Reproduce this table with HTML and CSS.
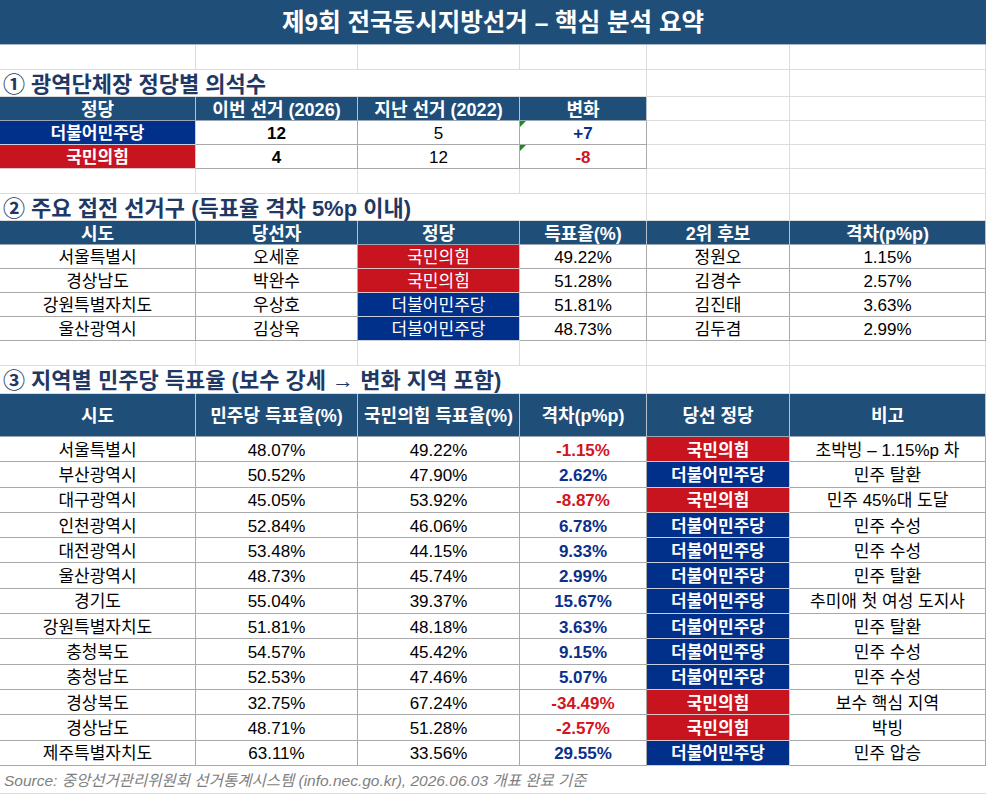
FILE: index.html
```html
<!DOCTYPE html>
<html lang="ko">
<head>
<meta charset="utf-8">
<title>제9회 전국동시지방선거 – 핵심 분석 요약</title>
<link rel="stylesheet" href="styles.css">
</head>
<body>
<div class="sheet">
  <div class="title">제9회 전국동시지방선거 – 핵심 분석 요약</div>

  <div class="r blank"><div class="g"></div><div class="g"></div><div class="g"></div><div class="g"></div><div class="g"></div><div class="g"></div></div>

  <div class="r sec"><div class="sec-t span3">① 광역단체장 정당별 의석수</div><div class="g"></div><div class="g"></div><div class="g"></div></div>

  <div class="r h24">
    <div class="c hd">정당</div><div class="c hd">이번 선거 (2026)</div><div class="c hd">지난 선거 (2022)</div><div class="c hd">변화</div><div class="g"></div><div class="g"></div>
  </div>
  <div class="r h24">
    <div class="c p-dem b">더불어민주당</div><div class="c b">12</div><div class="c">5</div><div class="c b blue flag">+7</div><div class="g"></div><div class="g"></div>
  </div>
  <div class="r h24">
    <div class="c p-ppp b">국민의힘</div><div class="c b">4</div><div class="c">12</div><div class="c b red flag">-8</div><div class="g"></div><div class="g"></div>
  </div>

  <div class="r blank"><div class="g"></div><div class="g"></div><div class="g"></div><div class="g"></div><div class="g"></div><div class="g"></div></div>

  <div class="r sec"><div class="sec-t span3">② 주요 접전 선거구 (득표율 격차 5%p 이내)</div><div class="g"></div><div class="g"></div><div class="g"></div></div>

  <div class="r h24">
    <div class="c hd">시도</div><div class="c hd">당선자</div><div class="c hd">정당</div><div class="c hd">득표율(%)</div><div class="c hd">2위 후보</div><div class="c hd">격차(p%p)</div>
  </div>
  <div class="r h24"><div class="c">서울특별시</div><div class="c">오세훈</div><div class="c p-ppp">국민의힘</div><div class="c">49.22%</div><div class="c">정원오</div><div class="c">1.15%</div></div>
  <div class="r h24"><div class="c">경상남도</div><div class="c">박완수</div><div class="c p-ppp">국민의힘</div><div class="c">51.28%</div><div class="c">김경수</div><div class="c">2.57%</div></div>
  <div class="r h24"><div class="c">강원특별자치도</div><div class="c">우상호</div><div class="c p-dem">더불어민주당</div><div class="c">51.81%</div><div class="c">김진태</div><div class="c">3.63%</div></div>
  <div class="r h24"><div class="c">울산광역시</div><div class="c">김상욱</div><div class="c p-dem">더불어민주당</div><div class="c">48.73%</div><div class="c">김두겸</div><div class="c">2.99%</div></div>

  <div class="r blank"><div class="g"></div><div class="g"></div><div class="g"></div><div class="g"></div><div class="g"></div><div class="g"></div></div>

  <div class="r sec sec3"><div class="sec-t span3">③ 지역별 민주당 득표율 (보수 강세 → 변화 지역 포함)</div><div class="g"></div><div class="g"></div><div class="g"></div></div>

  <div class="r h43">
    <div class="c hd">시도</div><div class="c hd">민주당 득표율(%)</div><div class="c hd">국민의힘 득표율(%)</div><div class="c hd">격차(p%p)</div><div class="c hd">당선 정당</div><div class="c hd">비고</div>
  </div>
  <div class="r h25"><div class="c">서울특별시</div><div class="c">48.07%</div><div class="c">49.22%</div><div class="c b red">-1.15%</div><div class="c p-ppp b">국민의힘</div><div class="c">초박빙 – 1.15%p 차</div></div>
  <div class="r h25"><div class="c">부산광역시</div><div class="c">50.52%</div><div class="c">47.90%</div><div class="c b blue">2.62%</div><div class="c p-dem b">더불어민주당</div><div class="c">민주 탈환</div></div>
  <div class="r h25"><div class="c">대구광역시</div><div class="c">45.05%</div><div class="c">53.92%</div><div class="c b red">-8.87%</div><div class="c p-ppp b">국민의힘</div><div class="c">민주 45%대 도달</div></div>
  <div class="r h25"><div class="c">인천광역시</div><div class="c">52.84%</div><div class="c">46.06%</div><div class="c b blue">6.78%</div><div class="c p-dem b">더불어민주당</div><div class="c">민주 수성</div></div>
  <div class="r h25"><div class="c">대전광역시</div><div class="c">53.48%</div><div class="c">44.15%</div><div class="c b blue">9.33%</div><div class="c p-dem b">더불어민주당</div><div class="c">민주 수성</div></div>
  <div class="r h25"><div class="c">울산광역시</div><div class="c">48.73%</div><div class="c">45.74%</div><div class="c b blue">2.99%</div><div class="c p-dem b">더불어민주당</div><div class="c">민주 탈환</div></div>
  <div class="r h25"><div class="c">경기도</div><div class="c">55.04%</div><div class="c">39.37%</div><div class="c b blue">15.67%</div><div class="c p-dem b">더불어민주당</div><div class="c">추미애 첫 여성 도지사</div></div>
  <div class="r h25"><div class="c">강원특별자치도</div><div class="c">51.81%</div><div class="c">48.18%</div><div class="c b blue">3.63%</div><div class="c p-dem b">더불어민주당</div><div class="c">민주 탈환</div></div>
  <div class="r h25"><div class="c">충청북도</div><div class="c">54.57%</div><div class="c">45.42%</div><div class="c b blue">9.15%</div><div class="c p-dem b">더불어민주당</div><div class="c">민주 수성</div></div>
  <div class="r h25"><div class="c">충청남도</div><div class="c">52.53%</div><div class="c">47.46%</div><div class="c b blue">5.07%</div><div class="c p-dem b">더불어민주당</div><div class="c">민주 수성</div></div>
  <div class="r h25"><div class="c">경상북도</div><div class="c">32.75%</div><div class="c">67.24%</div><div class="c b red">-34.49%</div><div class="c p-ppp b">국민의힘</div><div class="c">보수 핵심 지역</div></div>
  <div class="r h25"><div class="c">경상남도</div><div class="c">48.71%</div><div class="c">51.28%</div><div class="c b red">-2.57%</div><div class="c p-ppp b">국민의힘</div><div class="c">박빙</div></div>
  <div class="r h25"><div class="c">제주특별자치도</div><div class="c">63.11%</div><div class="c">33.56%</div><div class="c b blue">29.55%</div><div class="c p-dem b">더불어민주당</div><div class="c">민주 압승</div></div>

  <div class="source">Source: 중앙선거관리위원회 선거통계시스템 (info.nec.go.kr), 2026.06.03 개표 완료 기준</div>
</div>
</body>
</html>
```
FILE: styles.css
```css
* { box-sizing: border-box; }
html, body { margin: 0; padding: 0; background: #ffffff; }
body {
  font-family: "Liberation Sans", "Noto Sans CJK KR", sans-serif;
  color: #000000;
  font-size: 17px;
  line-height: 1;
}
.sheet { width: 986px; }

.title {
  height: 45px;
  background: #1f4e79;
  color: #ffffff;
  font-weight: bold;
  font-size: 24.5px;
  display: flex;
  align-items: center;
  justify-content: center;
  padding-top: 2px;
  border-bottom: 1px solid #a7b6c6;
}

.r {
  display: grid;
  grid-template-columns: 196px 162px 162px 127px 143px 196px;
}
.blank { height: 25px; }
.sec { height: 27px; }
.sec3 { height: 28px; }
.h24 { height: 24px; }
.h25 { height: 25.3px; }
.h43 { height: 43px; }

.g {
  border-right: 1px solid #dcdcdc;
  border-bottom: 1px solid #dcdcdc;
}
.span3 { grid-column: span 3; }
.sec-t {
  display: flex;
  align-items: center;
  padding-left: 3px;
  padding-top: 3px;
  font-size: 22px;
  font-weight: bold;
  color: #1f3864;
  white-space: nowrap;
  border-bottom: 1px solid #dcdcdc;
}

.c {
  position: relative;
  display: flex;
  align-items: center;
  justify-content: center;
  padding-top: 2px;
  white-space: nowrap;
  border-right: 1px solid #a9a9a9;
  border-bottom: 1px solid #a9a9a9;
}
.hd {
  background: #1f4e79;
  color: #ffffff;
  font-weight: bold;
  font-size: 18px;
  border-right-color: #b5c1cd;
  border-bottom-color: #9aa7b5;
}
.b { font-weight: bold; }
.blue { color: #0b2f8a; }
.red { color: #d5131c; }
.p-dem {
  background: #00308a;
  color: #ffffff;
  border-right-color: #c9cfdc;
  border-bottom-color: #c9cfdc;
}
.p-ppp {
  background: #c8141e;
  color: #ffffff;
  border-right-color: #dcc3c5;
  border-bottom-color: #dcc3c5;
}
.flag::before {
  content: "";
  position: absolute;
  left: 0;
  top: 0;
  width: 0;
  height: 0;
  border-top: 6px solid #1f8a1f;
  border-right: 6px solid transparent;
}

.source {
  height: 28px;
  display: flex;
  align-items: center;
  padding-left: 4px;
  padding-top: 2px;
  font-size: 15.5px;
  font-style: italic;
  color: #7f7f7f;
  border-bottom: 1px solid #dcdcdc;
  white-space: nowrap;
}
```
